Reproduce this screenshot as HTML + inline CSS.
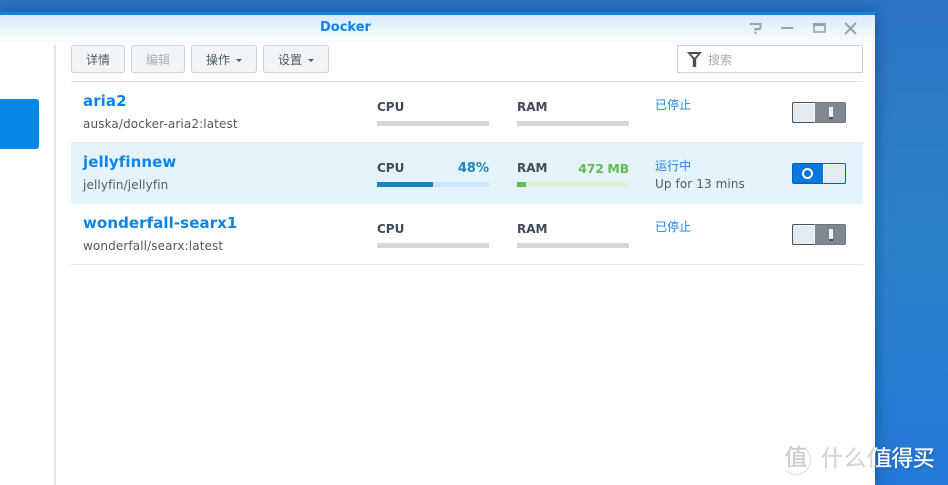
<!DOCTYPE html>
<html><head><meta charset="utf-8">
<style>
*{box-sizing:border-box;margin:0;padding:0}
html,body{width:948px;height:485px;overflow:hidden}
body{position:relative;font-family:"DejaVu Sans","Noto Sans CJK SC",sans-serif;background:linear-gradient(180deg,#2c74c6 0,#2e82cc 50%,#2478d8 100%);}
.a{position:absolute;white-space:nowrap}
#win{position:absolute;left:0;top:12px;width:875px;height:473px;background:#fff;box-shadow:0 0 14px rgba(10,50,100,.55)}
.btn{position:absolute;top:45px;height:28px;border:1px solid #c8d3de;border-radius:3px;background:#f0f5f9;font-size:12px;color:#4c5a67;line-height:28px;text-align:center}
.car{position:absolute;left:44px;top:13px;border:3px solid transparent;border-top:3px solid #4c5a67;border-bottom:0}
.name{position:absolute;left:83px;font-size:15px;font-weight:bold;color:#0a84e8;white-space:nowrap;line-height:18px;letter-spacing:.08px}
.sub{position:absolute;left:83px;font-size:12px;color:#505a64;white-space:nowrap;line-height:16px;letter-spacing:.12px}
.lbl{position:absolute;font-size:12px;font-weight:bold;color:#3f4a5a;line-height:14px}
.val{position:absolute;font-size:13px;font-weight:bold;line-height:14px;text-align:right;white-space:nowrap}
.bar{position:absolute;height:5px;width:112px;background:#d4d7da}
.st{position:absolute;left:655px;font-size:12px;line-height:16px;white-space:nowrap;letter-spacing:.1px}
.sw{position:absolute;left:792px;width:54px;height:21px;border-radius:2px;background:#7f8890;border:1px solid #6c7680}
.sw i{position:absolute;left:-1px;top:-1px;width:23px;height:21px;background:#e3eaf2;border:1px solid #4a545e;border-right-color:#f4f7fa;border-radius:2px;box-shadow:inset 0 1px 0 #fff}
.sw b{position:absolute;left:36px;top:4px;width:4px;height:12px;background:#f0f2f4;border-bottom:2px solid #47505a}
</style></head><body>
<div id="win"></div>
<div class="a" style="left:0;top:12px;width:875px;height:3px;background:#0a86e6"></div>
<div class="a" style="left:0;top:15px;width:875px;height:30px;background:linear-gradient(180deg,#d8ebf8,#fdfeff)"></div>
<div class="a" style="left:320px;top:20px;font-size:13px;font-weight:bold;color:#0a84e8;line-height:16px">Docker</div>

<svg class="a" style="left:745px;top:18px" width="120" height="20" viewBox="0 0 120 20" fill="none" stroke="#98a3ab" stroke-width="2">
<path d="M5 6h10.500v4l-1 1h-4v2"/><path d="M10.500 14v2"/>
<path d="M36 10h12"/>
<rect x="69" y="6" width="11" height="8" stroke-width="1.600"/><path d="M68 6.500h12.500" stroke-width="3"/>
<path d="M100 5l11 11M111 5l-11 11"/>
</svg>

<div class="a" style="left:54px;top:45px;width:2px;height:440px;background:#e2e4e6"></div>
<div class="a" style="left:0;top:99px;width:39px;height:50px;background:#0587e8;border-radius:0 3px 3px 0"></div>

<div class="btn" style="left:71px;width:54px">详情</div>
<div class="btn" style="left:131px;width:54px;color:#a6adb4">编辑</div>
<div class="btn" style="left:191px;width:66px;text-align:left;padding-left:14px">操作<span class="car"></span></div>
<div class="btn" style="left:263px;width:66px;text-align:left;padding-left:14px">设置<span class="car"></span></div>

<div class="a" style="left:677px;top:45px;width:186px;height:28px;border:1px solid #c8d3de;background:#fff"></div>
<svg class="a" style="left:686px;top:50px" width="18" height="18" viewBox="0 0 18 18"><path d="M1 2h15l-5.800 7v8h-3.400v-8z" fill="#47525e"/><path d="M5 4h7l-3.500 4z" fill="#fff"/></svg>
<div class="a" style="left:708px;top:52px;font-size:12px;color:#a4acb4;line-height:16px">搜索</div>

<div class="a" style="left:71px;top:81px;width:792px;height:1px;background:#dde3e8"></div>
<div class="a" style="left:71px;top:142px;width:792px;height:62px;background:#e5f3fd;border-top:1px solid #e2ecf4"></div>
<div class="a" style="left:71px;top:264px;width:792px;height:1px;background:#e6ebf0"></div>

<div class="name" style="top:92px">aria2</div>
<div class="sub" style="top:116px">auska/docker-aria2:latest</div>
<div class="lbl" style="left:377px;top:100px">CPU</div>
<div class="bar" style="left:377px;top:121px"></div>
<div class="lbl" style="left:517px;top:100px">RAM</div>
<div class="bar" style="left:517px;top:121px"></div>
<div class="st" style="top:97px;color:#1f86dd">已停止</div>
<div class="sw" style="top:102px"><i></i><b></b></div>

<div class="name" style="top:153px">jellyfinnew</div>
<div class="sub" style="top:177px">jellyfin/jellyfin</div>
<div class="lbl" style="left:377px;top:161px">CPU</div>
<div class="val" style="right:459px;top:162px;color:#1f86bd">48%</div>
<div class="bar" style="left:377px;top:182px;background:#cce5f9"></div>
<div class="bar" style="left:377px;top:182px;width:56px;background:#1a86bd"></div>
<div class="lbl" style="left:517px;top:161px">RAM</div>
<div class="val" style="right:319px;top:162px;color:#62bb55;font-size:12.5px;letter-spacing:-.2px;word-spacing:-.5px">472 MB</div>
<div class="bar" style="left:517px;top:182px;background:#e0f1db"></div>
<div class="bar" style="left:517px;top:182px;width:9px;background:#62bb55"></div>
<div class="st" style="top:158px;color:#1f86dd">运行中</div>
<div class="st" style="top:176px;color:#505a64">Up for 13 mins</div>
<div class="a" style="left:792px;top:163px;width:54px;height:21px;background:#0878e0;border:1px solid #0a5fb0;border-radius:2px">
<span style="position:absolute;left:9px;top:4px;width:11px;height:11px;border:2px solid #fff;border-radius:50%"></span>
<span style="position:absolute;right:-1px;top:-1px;width:23px;height:21px;background:#e3eaf2;border:1px solid #0a5fb0;border-left-color:#f4f7fa;border-radius:2px;box-shadow:inset 0 1px 0 #fff"></span></div>

<div class="name" style="top:214px">wonderfall-searx1</div>
<div class="sub" style="top:238px">wonderfall/searx:latest</div>
<div class="lbl" style="left:377px;top:222px">CPU</div>
<div class="bar" style="left:377px;top:243px"></div>
<div class="lbl" style="left:517px;top:222px">RAM</div>
<div class="bar" style="left:517px;top:243px"></div>
<div class="st" style="top:219px;color:#1f86dd">已停止</div>
<div class="sw" style="top:224px"><i></i><b></b></div>

<div class="a" style="left:781px;top:445px;width:30px;height:30px;border:1px solid #dcdcdc;border-left-color:transparent;border-top-color:transparent;border-radius:50%;color:#cfcfcf;font-size:23px;line-height:25px;text-align:center;-webkit-text-stroke:.4px #cfcfcf">值</div>
<div class="a" style="left:821px;top:445px;font-size:22px;line-height:30px;color:#d4d4d4;letter-spacing:1px;width:54px;overflow:hidden;-webkit-text-stroke:.3px #d4d4d4">什么值</div>
<div class="a" style="left:875px;top:445px;width:70px;height:32px;overflow:hidden"><span style="position:absolute;left:-5px;top:0;font-size:22px;line-height:30px;color:#fff;letter-spacing:-.6px;-webkit-text-stroke:.3px #fff;text-shadow:1px 1px 2px rgba(0,0,0,.25)">值得买</span></div>
</body></html>
